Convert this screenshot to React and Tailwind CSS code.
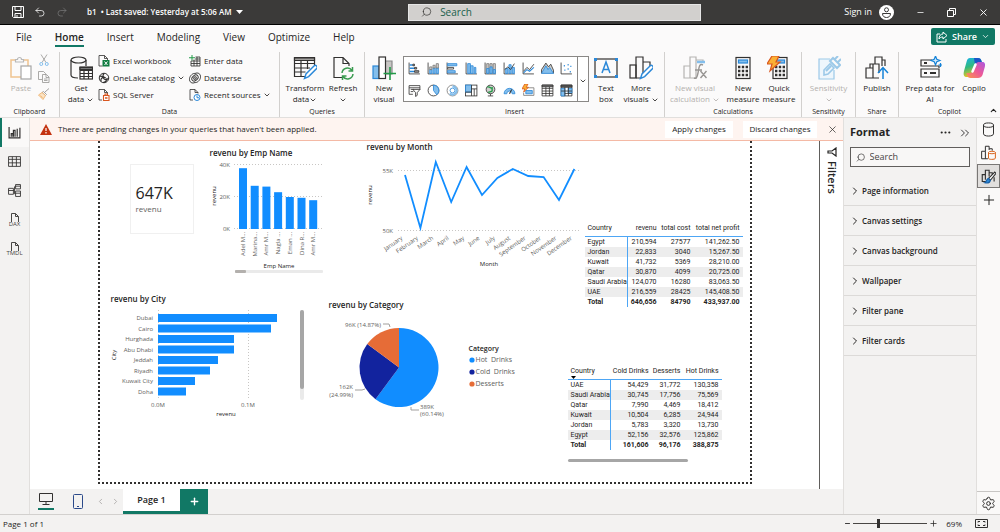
import { ChevronDown, ChevronUp, ChevronRight, ChevronsRight, Search, X, Plus, Minus, Ellipsis, Undo2, Redo2, Settings } from "lucide-react";

const INK = "#323130";
const BLUE = "#2b88d8";
const SKY = "#83beec";

const Svg = ({ w = 24, h = 24, className = "", children }) => (
  <svg width={w} height={h} viewBox="0 0 24 24" fill="none" stroke={INK} strokeWidth="1.2" className={"shrink-0 " + className} aria-hidden="true">{children}</svg>
);

const Calculator = () => (
  <>
    <rect x="5" y="1.5" width="14" height="21" />
    <rect x="7.5" y="4" width="9" height="3" fill={SKY} stroke={BLUE} />
    <path d="M7 11h2.4M10.800 11h2.400M14.600 11h2.400M7 15h2.400M10.800 15h2.400M14.600 15h2.400M7 19h2.400M10.800 19h2.400M14.600 19h2.400" strokeWidth="2.4" />
  </>
);

const Pencil = () => <path d="M11.500 22.500l1.500-4.500 8-8a1.800 1.800 0 0 1 2.600 2.600l-8 8z" fill="#fff" stroke={BLUE} strokeWidth="1.400" />;

const icons = {
  paste: <g><path d="M7 4H2v17h10M14 4h5v6" stroke="#f0c490" strokeWidth="1.500" /><path d="M6.500 6V3.500h2a2 2 0 0 1 4 0h2V6z" stroke="#b8b8b8" /><rect x="12" y="10" width="10" height="13" fill="#fff" stroke="#a6a6a6" /></g>,
  cut: <g stroke="#979593"><path d="M6 1l10 16M18 1L8 17" strokeWidth="1.600" /><circle cx="6.500" cy="20" r="3" stroke={SKY} strokeWidth="2" /><circle cx="17.500" cy="20" r="3" stroke={SKY} strokeWidth="2" /></g>,
  copy: <g stroke="#979593" strokeWidth="1.600"><path d="M8 17H1V1h10l4 4v2" /><path d="M9 7h8l5 5v11H9zM16 7v6h6M12 16h7M12 19h7" /></g>,
  brush: <g strokeWidth="1.800"><path d="M22 1l-8 7M11 7l6 6-2 2-7-6z" stroke="#979593" /><path d="M8 9l7 6-5 8L1 14zM5 15l4 5" stroke="#eeb370" fill="#fbe3c4" /></g>,
  getdata: <g><ellipse cx="9.500" cy="4" rx="7.500" ry="3" /><path d="M2 4v15c0 1.800 3 3 7 3M17 4v6" /><rect x="11" y="11" width="12.500" height="12" fill="#fff" /><path d="M11 14.500h12.500M11 17.500h12.500M11 20.500h12.500M15 11v12M19.500 11v12" /><path d="M11 11.500h12.500v2H11z" fill="#777" /></g>,
  transform: <g><path d="M21.500 9V1.500h-20v19H12M1.500 7.500h20M1.500 12H17M1.500 16h11M8 5v15.500M14.500 5v8" /><path d="M1.500 2h20v2.500h-20z" fill="#a19f9d" /><Pencil /></g>,
  refresh: <g><path d="M12 21.500H3v-20h9l6 6V10M12 1.500v6h6" /><path d="M11 17a5.500 5.500 0 0 1 10-2.500M22 18a5.500 5.500 0 0 1-10 2.500M21.500 11v4h-4M11.500 24v-4h4" stroke="#3a9b50" strokeWidth="1.500" /></g>,
  newvisual: <g><rect x="1" y="10" width="6" height="12.500" fill={SKY} stroke={BLUE} /><path d="M13 5h7v13h-7z" fill="#c8c6c4" stroke="#888" /><rect x="7" y="1" width="6.500" height="21.500" fill="#fff" /><path d="M18 11v13M11.500 17.500h12.500" stroke="#239a48" strokeWidth="1.600" /></g>,
  textbox: <g><rect x="1" y="3" width="22" height="18" /><path d="M8 17l4-11 4 11M9.300 13.500h5.400" stroke={BLUE} strokeWidth="1.500" /><path d="M0 2h3v3H0zM21 2h3v3h-3zM0 19h3v3H0zM21 19h3v3h-3z" fill={BLUE} stroke="none" /></g>,
  morevisuals: <g><rect x="1" y="9" width="6" height="13" /><path d="M7 22V1h7v17M14 6h7v4M7 22h5" /><Pencil /></g>,
  visualcalc: <g stroke="#b5b3b1"><path d="M1 10h6v12H1zM7 1h6v21H7zM13 4h7v3" /><path d="M14 6h8" stroke={SKY} strokeWidth="2.500" /><path d="M20 9c-4-2-4 3-5 8s-2 6-4 5M12 14h7M17.500 15l6 7M23.500 15l-6 7" stroke="#979593" strokeWidth="1.400" /></g>,
  newmeasure: <Calculator />,
  quick: <g transform="translate(1 0)"><Calculator /><path d="M4 0h7L8 6h4L2 15l2-7H-1z" fill="#fbb034" stroke="#d9561f" /></g>,
  sensitivity: <g stroke="#9cc9e8"><path d="M13 3H2v20h15v-9" fill="#eef6fc" /><path d="M7 14l6-6 4 4-6 6-4 1z" strokeWidth="1.600" /><path d="M13 5l3-3 7 7-3 3zM17 4l4-4M20 7l4-4M9 15l5-5" strokeWidth="2" /></g>,
  publish: <g><path d="M1 12h7v10H1zM8 12V8h6v9M10 8V1h7v9M8 22h6M5 12V8h4M17 4h3v6" /><path d="M18 23V12M13 17l5-5.500 5 5.500" stroke="#1683d8" strokeWidth="1.500" /></g>,
  prep: <g><path d="M14 4H3v6h18v2M3 13h18v8H3z" /><path d="M6 7h3M6 17h3M12 17h6" strokeWidth="2" /><path d="M17.500 0l1.300 3.200L22 4.500l-3.200 1.300L17.500 9l-1.300-3.200L13 4.500l3.200-1.300z" fill="#cfe9fb" stroke="#1683d8" /><path d="M22.500 7v4M20.500 9h4" stroke="#1683d8" /></g>,
};

const CopilotLogo = () => (
  <svg width="24" height="24" viewBox="0 0 24 24" aria-hidden="true">
    <defs>
      <linearGradient id="cpA" x1="0" y1="0" x2="0.300" y2="1"><stop offset="0" stopColor="#17b2e8" /><stop offset="0.500" stopColor="#31b97e" /><stop offset="1" stopColor="#f2c51b" /></linearGradient>
      <linearGradient id="cpB" x1="1" y1="0" x2="0" y2="1"><stop offset="0" stopColor="#a958e0" /><stop offset="0.500" stopColor="#ee5896" /><stop offset="1" stopColor="#f99a49" /></linearGradient>
    </defs>
    <path d="M8 2h8c2 0 3 1 3.500 3l.8 2.500H16c-2 0-3 1-3.500 3L10 18c-.6 2-1.500 3-3.500 3H5c-3 0-4-2-3-6l2.500-9C5.300 3 6 2 8 2z" fill="url(#cpA)" />
    <path d="M12 2h4c2 0 3 1 3.500 3l.8 2.500H16c-1.500 0-2.500.6-3 2z" fill="#1b55c8" />
    <path d="M16 22H8.500C6.500 22 5.500 21 5 19l-.6-2H8c2 0 3-1 3.500-3L14 8c.6-1.500 1.500-2 3.500-2H20c3 0 3.500 2 2.800 5l-2.300 8c-.7 2-2.500 3-4.500 3z" fill="url(#cpB)" />
    <path d="M13.500 8.500l-3 7" stroke="#fff" strokeWidth="2.500" strokeLinecap="round" />
  </svg>
);

const rowIcons = {
  excel: <g strokeWidth="1.600"><path d="M9 22H2V1h11l6 6v3M13 1v6h6" /><rect x="9" y="10" width="14" height="13" fill="#107c41" stroke="none" /><path d="M13 13l6 7M19 13l-6 7" stroke="#fff" strokeWidth="2" /></g>,
  onelake: <g strokeWidth="2"><circle cx="12" cy="12" r="9.500" /><path d="M3 9c7-3 7 5 11 6s6-1 7-3M6 19c-1-6 2-9 8-8M12 3c-4 4-2 8 4 9M10 21c5 0 8-4 7-8" strokeWidth="2.400" /></g>,
  sql: <g strokeWidth="1.600"><path d="M8 22H2V1h11l6 6v3M13 1v6h6" /><path d="M11 13h11v10H11zM14 13v-3h5v3" fill="#fff" stroke="#d9561f" strokeWidth="2.200" /><path d="M14 18h5" stroke="#d9561f" strokeWidth="3" /></g>,
  enter: <g strokeWidth="1.700"><path d="M13 4h9v18H4V12M4 17h18M4 12h18M12 8h10M10 9v13M16 4v18" /><path d="M6 0v11M0 5.500h12" stroke="#239a48" strokeWidth="2" /></g>,
  dataverse: <g strokeWidth="1.900"><path d="M12 3c6-3 12 1 11 8-1 6-7 11-11 10M12 21c-6 3-12-1-11-8C2 7 8 2 12 3" /><ellipse cx="12" cy="12" rx="7" ry="5" transform="rotate(-40 12 12)" /><ellipse cx="12" cy="12" rx="3" ry="2" transform="rotate(-40 12 12)" /></g>,
  recent: <g strokeWidth="1.600"><path d="M8 22H2V1h10l6 6v2M12 1v6h6" /><circle cx="16" cy="17" r="6" fill="#fff" stroke={BLUE} strokeWidth="2" /><path d="M16 13v4.500h4" stroke={BLUE} strokeWidth="2" /></g>,
};

const AXES = <path d="M2 1v21h20" />;
const gallery = [
  ["Stacked bar chart", <>{AXES}<path d="M3 4h6v3H3zM3 10h9v3H3zM3 16h9v3H3z" fill={BLUE} stroke="none" /><path d="M9 4h3v3H9zM12 10h4v3h-4zM12 16h8v3h-8z" fill="#a19f9d" /></>],
  ["Stacked column chart", <>{AXES}<path d="M5 14h4v7H5zM11 11h4v10h-4zM17 11h4v10h-4z" fill={SKY} stroke={BLUE} /><path d="M5 9h4v5H5zM11 6h4v5h-4zM17 3h4v8h-4z" fill="#d2d0ce" stroke="#797775" /></>],
  ["Clustered bar chart", <>{AXES}<path d="M3 3h17v4H3zM3 16h14v4H3z" fill={SKY} stroke={BLUE} /><path d="M3 10h11v3H3z" fill="#fff" /></>],
  ["Clustered column chart", <>{AXES}<path d="M5 3h5v18H5z" fill={SKY} stroke={BLUE} /><path d="M10 7h5v14h-5zM17 10h3v11h-3z" fill={SKY} stroke={BLUE} /></>],
  ["100% stacked chart", <>{AXES}<path d="M5 3h4v18H5zM11 3h4v18h-4zM17 3h4v18h-4z" fill="#d2d0ce" stroke="#797775" /><path d="M5 12h4v9H5zM11 9h4v12h-4zM17 14h4v7h-4z" fill={SKY} stroke={BLUE} /></>],
  ["Line and column chart", <>{AXES}<path d="M5 12h4v9H5zM11 5h4v16h-4zM17 10h4v11h-4z" fill={SKY} stroke={BLUE} /><path d="M3 14l6-5 5 5 7-11" /></>],
  ["Line chart", <>{AXES}<path d="M3 17l6-7 5 4 8-10" /><path d="M3 20l6-6 5 3 8-7" stroke={BLUE} strokeWidth="2" /></>],
  ["Area chart", <><path d="M1 21V14l8-12 5 7 4-5 5 11v6" fill="#d2d0ce" /><path d="M1 21l8-14 4 7 3-4 7 11z" fill={SKY} stroke={BLUE} /></>],
  ["Scatter chart", <>{AXES}<path d="M7 7h2M14 5h2M19 8h2M8 15h2M14 13h2M18 18h2" stroke={BLUE} strokeWidth="2.500" /></>],
  ["Slicer", <><path d="M9 19H2V3h20v8M2 7h20M5 10h6M5 14h5" /><path d="M9 10h13l-5 6v5l-3 2v-7z" fill="#fff" /></>],
  ["Pie chart", <><circle cx="12" cy="12" r="10" /><path d="M12 2a10 10 0 0 1 6 18l-6-8z" fill={SKY} stroke={BLUE} /></>],
  ["Donut chart", <><circle cx="12" cy="12" r="10" stroke="#797775" /><circle cx="12" cy="12" r="4.500" stroke={BLUE} /><path d="M12 4.500a7.500 7.500 0 1 1-5 13" stroke={SKY} strokeWidth="4" /></>],
  ["Treemap", <><rect x="1" y="2" width="21" height="20" /><path d="M1 2h11v13H1z" fill={SKY} stroke={BLUE} /><path d="M12 9h10M17 9v13M1 15h11M12 2v20" /></>],
  ["Map", <><circle cx="12" cy="10" r="8" fill="#d2d0ce" /><path d="M6 6c5-3 5 3 9 1v6c-3 3-6 0-7 3" stroke="#239a48" strokeWidth="2.500" /><path d="M7 22h10M12 18v4" /></>],
  ["Gauge", <><path d="M2 18a10 10 0 0 1 20 0h-5a5 5 0 0 0-10 0z" fill={SKY} stroke={BLUE} /><path d="M12 18l4-8" strokeWidth="2" /></>],
  ["Card", <><path d="M7 7h15v14H3v-5" stroke="#797775" /><path d="M7 12h12v6H7z" fill={SKY} stroke={BLUE} /><path d="M5 0h6L8 6h4l-9 9 2-6H0z" fill="#fbb034" stroke="#d9561f" /></>],
  ["Table", <><path d="M2 2h20v20H2zM2 8h20M2 13h20M2 17.500h20M9 5v17M15.500 5v17" /><path d="M2 2h20v3H2z" fill="#777" /></>],
  ["Matrix", <><path d="M2 2h20v20H2z" fill="#fff" /><path d="M2 8h7v14H2zM15 8h7v9h-7z" fill={SKY} stroke={BLUE} /><path d="M2 13h20M9 17.500h13M9 5v17M15.500 5v17" /><path d="M2 2h20v4H2z" fill="#555" /></>],
];

const Chevron = () => <ChevronDown size={8} strokeWidth={2.5} className="inline-block" />;

const Group = ({ label, className, children }) => (
  <section aria-label={label} className={"flex flex-col border-r border-[#d2d0ce] " + className}>
    <div className="flex h-[55px] items-start">{children}</div>
    <div className="text-center text-[7px] leading-[10px]">{label}</div>
  </section>
);

const BigButton = ({ icon, lines, chevron, disabled, className }) => (
  <button disabled={disabled} className={"flex flex-col items-center pt-1 text-[8px] leading-[11px] whitespace-nowrap " + (disabled ? "text-[#b3b0ad] " : "") + className}>
    {icon === "copilot" ? <CopilotLogo /> : <Svg>{icons[icon]}</Svg>}
    <span className="mt-[2px]">{lines[0]}</span>
    <span>{lines[1]}{chevron && <Chevron />}</span>
  </button>
);

const RowButton = ({ icon, label, chevron }) => (
  <button className="flex h-[17px] items-center gap-[3px] text-[8px] whitespace-nowrap">
    <Svg w={12} h={12}>{rowIcons[icon]}</Svg>
    <span>{label} {chevron && <Chevron />}</span>
  </button>
);

const TitleBar = () => (
  <header className="flex h-[25px] items-center border-b border-black bg-[#3b3a39] text-white">
    <div className="flex w-[408px] items-center pl-3 text-[8px]">
      <button aria-label="Save" className="mr-[10px]">
        <svg width="12" height="12" viewBox="0 0 12 12" fill="none" stroke="#fff"><path d="M.5.5h11v11h-10l-1-1zM3 .5v4h6v-4M3 11.500v-4h6v4M5 9v2.500" /></svg>
      </button>
      <button aria-label="Undo" className="mr-[10px]"><Undo2 size={12} strokeWidth={1.5} /></button>
      <button aria-label="Redo" className="mr-[19px] text-[#777]"><Redo2 size={12} strokeWidth={1.5} /></button>
      <span className="font-semibold">b1 &nbsp;• Last saved: Yesterday at 5:06 AM</span>
      <svg width="7" height="4" viewBox="0 0 7 4" className="ml-1" fill="#fff"><path d="M0 0h7L3.500 4z" /></svg>
    </div>
    <label className="flex h-[17px] flex-1 items-center gap-2 border border-[#e5e5e5] bg-[#d2d0ce] px-3 text-[#323130]">
      <Search size={12} strokeWidth={1.5} className="-scale-x-100" />
      <input type="search" aria-label="Search" placeholder="Search" className="w-full bg-transparent text-[10px] outline-none placeholder:text-[#205e4c]" />
    </label>
    <div className="flex w-[299px] items-center justify-end pr-[11px]">
      <button className="mr-[7px] text-[9px]">Sign in</button>
      <button aria-label="Account" className="mr-[22px]">
        <svg width="15" height="15" viewBox="0 0 15 15"><circle cx="7.500" cy="7.500" r="7.500" fill="#fff" /><g fill="none" stroke="#3b3a39"><circle cx="7.500" cy="4.800" r="2" /><path d="M3.500 8.500h8c0 3-2 4-4 4s-4-1-4-4z" /></g></svg>
      </button>
      <button aria-label="Minimize" className="mr-[22px]"><Minus size={9} strokeWidth={2} /></button>
      <button aria-label="Restore" className="mr-[22px]">
        <svg width="9" height="9" viewBox="0 0 9 9" fill="none" stroke="#fff"><path d="M.5 2.500h6v6h-6zM2.500 2.500v-2h6v6h-2" /></svg>
      </button>
      <button aria-label="Close"><X size={11} strokeWidth={2} /></button>
    </div>
  </header>
);

const MENU = ["File", "Home", "Insert", "Modeling", "View", "Optimize", "Help"];

const MenuBar = () => (
  <nav className="flex h-[23px] items-center justify-between bg-[#fbfafa] pr-[5px] pl-4">
    <div className="flex gap-[23px] text-[10px]">
      {MENU.map((m) => (
        <button key={m} className={"h-[20px] border-b-2 leading-[20px] " + (m === "Home" ? "border-[#117865] font-semibold" : "border-transparent")}>{m}</button>
      ))}
    </div>
    <button className="flex h-[17px] items-center gap-1 rounded-xs bg-[#117865] px-[5px] text-[9px] font-semibold text-white">
      <svg width="12" height="12" viewBox="0 0 12 12" fill="none" stroke="#fff"><path d="M4 3H1v8h9V8M7 1l4 3.500L7 8V6C5 6 4 6.500 3 8c0-3 1.500-5 4-5z" /></svg>
      Share
      <ChevronDown size={9} />
    </button>
  </nav>
);

const Ribbon = () => (
  <div className="relative flex h-[70px] border-b border-[#e1dfdd] bg-[#fbfafa] pt-1">
    <Group label="Clipboard" className="w-[60px]">
      <BigButton icon="paste" lines={["Paste", ""]} disabled className="w-[38px] pl-1" />
      <div className="mt-[2px] flex flex-col gap-[5px]">
        {["cut", "copy", "brush"].map((n) => (
          <button key={n} aria-label={n} disabled><Svg w={12} h={12}>{icons[n]}</Svg></button>
        ))}
      </div>
    </Group>
    <Group label="Data" className="w-[220px]">
      <BigButton icon="getdata" lines={["Get", "data "]} chevron className="w-[38px] pl-1" />
      <div className="w-[91px]">
        <RowButton icon="excel" label="Excel workbook" />
        <RowButton icon="onelake" label="OneLake catalog" chevron />
        <RowButton icon="sql" label="SQL Server" />
      </div>
      <div>
        <RowButton icon="enter" label="Enter data" />
        <RowButton icon="dataverse" label="Dataverse" />
        <RowButton icon="recent" label="Recent sources" chevron />
      </div>
    </Group>
    <Group label="Queries" className="w-[85px]">
      <BigButton icon="transform" lines={["Transform", "data"]} chevron className="w-[50px]" />
      <BigButton icon="refresh" lines={["Refresh", ""]} chevron className="w-[26px]" />
    </Group>
    <Group label="Insert" className="w-[300px]">
      <BigButton icon="newvisual" lines={["New", "visual"]} className="w-[38px]" />
      <div className="mt-1 flex h-[46px] border border-[#8a8886] bg-white">
        <div className="grid grid-cols-9 items-center px-[1px]">
          {gallery.map(([name, art]) => (
            <button key={name} title={name} aria-label={name} className="flex w-[19px] justify-center"><Svg w={13} h={13} className="stroke-[1.5]">{art}</Svg></button>
          ))}
        </div>
        <button aria-label="More visual types" className="border-l border-[#8a8886] px-[1px]"><Chevron /></button>
      </div>
      <BigButton icon="textbox" lines={["Text", "box"]} className="w-[34px]" />
      <BigButton icon="morevisuals" lines={["More", "visuals "]} chevron className="w-[36px]" />
    </Group>
    <Group label="Calculations" className="w-[137px]">
      <BigButton icon="visualcalc" lines={["New visual", "calculation "]} chevron disabled className="w-[60px]" />
      <BigButton icon="newmeasure" lines={["New", "measure"]} className="w-[36px]" />
      <BigButton icon="quick" lines={["Quick", "measure"]} className="w-[36px]" />
    </Group>
    <Group label="Sensitivity" className="w-[54px]">
      <BigButton icon="sensitivity" lines={["Sensitivity", ""]} chevron disabled className="w-full" />
    </Group>
    <Group label="Share" className="w-[43px]">
      <BigButton icon="publish" lines={["Publish", ""]} className="w-full" />
    </Group>
    <Group label="Copilot" className="flex-1 border-r-0">
      <BigButton icon="prep" lines={["Prep data for", "AI"]} className="w-[62px]" />
      <BigButton icon="copilot" lines={["Copilo", ""]} className="w-[26px]" />
    </Group>
    <button aria-label="Collapse ribbon" className="absolute right-[2px] bottom-[2px]"><ChevronUp size={9} strokeWidth={3} /></button>
  </div>
);

const views = [
  ["Report view", <path d="M2 2v20h20V3M6 20v-7M10 20V8h3v12M17 20V5M6 14h3v6" strokeWidth="2.200" />],
  ["Table view", <path d="M1 3h22v18H1zM1 8h22M1 14.500h22M8 3v18M15.500 3v18" strokeWidth="1.600" />],
  ["Model view", <path d="M1 8h9v11H1zM1 12h9M14 1h9v8h-9zM14 4h9M14 13h9v10h-9zM14 17h9M10 12h2V5h2M12 12v6h2" strokeWidth="1.600" />],
];

const LeftNav = () => (
  <nav className="flex w-[30px] flex-col border-r border-[#e1dfdd] bg-[#f3f2f1]">
    {views.map(([name, art], i) => (
      <button key={name} aria-label={name} className={"flex h-[29px] w-full items-center justify-center border-l-2 pr-[2px] " + (i === 0 ? "border-[#117865] bg-[#faf9f8]" : "border-transparent")}>
        <Svg w={13} h={13}>{art}</Svg>
      </button>
    ))}
    {["DAX", "TMDL"].map((t) => (
      <button key={t} className="flex h-[29px] w-full flex-col items-center justify-center text-[6px] leading-[5px] text-[#484644]">
        <svg width="10" height="9" viewBox="0 0 10 9" fill="none" stroke="#484644"><path d="M1.500 9V.5h4l3 3V9M5.500.5v3h3" /></svg>
        {t}
      </button>
    ))}
  </nav>
);

const Notice = () => (
  <div role="alert" className="flex h-[23px] items-center border-b border-[#f4b9a5] bg-[#fef4f0] pr-[5px] pl-[10px] text-[8px]">
    <svg width="12" height="11" viewBox="0 0 12 11"><path d="M6 0l6 11H0z" fill="#c4320f" /><path d="M6 4v3M6 8v1.500" stroke="#fff" strokeWidth="1.200" /></svg>
    <span className="ml-[6px] flex-1">There are pending changes in your queries that haven't been applied.</span>
    <button className="h-[17px] w-[68px] bg-white">Apply changes</button>
    <button className="ml-[10px] h-[17px] w-[74px] bg-white">Discard changes</button>
    <button aria-label="Dismiss" className="ml-[10px]"><X size={11} strokeWidth={1.5} /></button>
  </div>
);

const VisualTitle = ({ children }) => <h3 className="text-[8px] leading-[12px] font-semibold text-[#252423]">{children}</h3>;

const GRID = { stroke: "#c8c6c4", strokeWidth: 1, strokeDasharray: "1 2" };

const employees = [["Adel M...", 38], ["Marina...", 27], ["Amr M...", 26.5], ["Nagla ...", 23], ["Eman ...", 20], ["Dina R...", 19.5], ["Amr M...", 18]];

const EmpChart = () => (
  <svg width="120" height="116" viewBox="0 0 120 116" className="text-[6px]" fill="#605e5c">
    {[40, 20, 0].map((v) => (
      <g key={v}>
        <path d={`M27 ${69.5 - v * 1.6}h90`} {...GRID} />
        <text x="23" y={72 - v * 1.6} textAnchor="end">{v}K</text>
      </g>
    ))}
    {employees.map(([name, v], i) => (
      <g key={i}>
        <rect x={32 + i * 11.700} y={70 - v * 1.6} width="8" height={v * 1.6} fill="#118DFF" />
        <text transform={`translate(${38 + i * 11.700} 73) rotate(-90)`} textAnchor="end">{name}</text>
      </g>
    ))}
    <text transform="translate(9 37) rotate(-90)" textAnchor="middle" fill="#252423">revenu</text>
    <text x="72" y="109" textAnchor="middle" fill="#252423">Emp Name</text>
    <rect x="28" y="111" width="88" height="3" rx="1" fill="#eaeaea" />
    <rect x="28" y="111" width="11" height="3" rx="1" fill="#b3b0ad" />
  </svg>
);

const months = [["January", 23], ["February", 76], ["March", 10], ["April", 50], ["May", 15], ["June", 43], ["July", 26], ["August", 17], ["September", 24], ["October", 25], ["November", 48], ["December", 17]];

const MonthChart = () => (
  <svg width="221" height="118" viewBox="0 0 221 118" className="text-[6px]" fill="#605e5c">
    <path d="M36 17.500h183M36 77.500h183" {...GRID} />
    <text x="31" y="20" textAnchor="end">55K</text>
    <text x="31" y="80" textAnchor="end">50K</text>
    <polyline points={months.map(([, y], i) => `${43 + i * 15.400},${y - 1}`).join(" ")} fill="none" stroke="#118DFF" strokeWidth="1.800" />
    {months.map(([name], i) => (
      <text key={name} transform={`translate(${41 + i * 15.400} 86) rotate(-35)`} textAnchor="end">{name}</text>
    ))}
    <text transform="translate(10 42) rotate(-90)" textAnchor="middle" fill="#252423">revenu</text>
    <text x="127" y="113" textAnchor="middle" fill="#252423">Month</text>
  </svg>
);

const cities = [["Dubai", 119], ["Cairo", 113], ["Hurghada", 76], ["Abu Dhabi", 76], ["Jeddah", 60], ["Riyadh", 52], ["Kuwait City", 37], ["Doha", 28]];

const CityChart = () => (
  <svg width="200" height="114" viewBox="0 0 200 114" className="text-[6px]" fill="#605e5c">
    <path d="M50.500 5v89M140.500 5v89" {...GRID} />
    {cities.map(([name, v], i) => (
      <g key={name}>
        <rect x="50" y={9 + i * 10.500} width={v} height="8" fill="#118DFF" />
        <text x="45" y={15 + i * 10.500} textAnchor="end">{name}</text>
      </g>
    ))}
    <text x="50" y="102" textAnchor="middle">0.0M</text>
    <text x="140" y="102" textAnchor="middle">0.1M</text>
    <text x="118" y="111" textAnchor="middle" fill="#252423">revenu</text>
    <text transform="translate(8 50) rotate(-90)" textAnchor="middle" fill="#252423">City</text>
    <rect x="192" y="5" width="4" height="90" rx="2" fill="#eaeaea" />
    <rect x="192" y="5" width="4" height="79" rx="2" fill="#a6a6a6" />
  </svg>
);

const slices = [["Hot  Drinks", 0, 0.6014, "#118DFF"], ["Cold  Drinks", 0.6014, 0.8513, "#12239E"], ["Desserts", 0.8513, 1, "#E66C37"]];

const arc = (from, to) => {
  const pt = (t) => `${73 + 39.5 * Math.sin(t * 2 * Math.PI)} ${56.5 - 39.5 * Math.cos(t * 2 * Math.PI)}`;
  return `M73 56.5L${pt(from)}A39.5 39.5 0 ${to - from > 0.5 ? 1 : 0} 1 ${pt(to)}z`;
};

const CategoryChart = () => (
  <div className="flex">
    <svg width="143" height="114" viewBox="0 0 143 114" className="text-[6px]" fill="#605e5c">
      {slices.map(([name, from, to, color]) => <path key={name} d={arc(from, to)} fill={color} />)}
      <path d="M57 13h6l1 3M29 79h7l3-1M85 96v3h8" fill="none" stroke="#a19f9d" />
      <text x="55" y="16" textAnchor="end">96K (14.87%)</text>
      <text x="27" y="78" textAnchor="end">162K</text>
      <text x="27" y="86" textAnchor="end">(24.99%)</text>
      <text x="94" y="98">389K</text>
      <text x="94" y="105">(60.14%)</text>
    </svg>
    <div className="mt-[33px] text-[7px] leading-[12px] text-[#605e5c]">
      <div className="leading-[10px] font-semibold text-[#252423]">Category</div>
      {slices.map(([name, , , color]) => (
        <div key={name} className="flex items-center gap-[1px] whitespace-pre">
          <svg width="6" height="6" viewBox="0 0 6 6"><circle cx="3" cy="3" r="2.600" fill={color} /></svg>
          {name}
        </div>
      ))}
    </div>
  </div>
);

const DataTable = ({ caption, head, rows, cols, sorted }) => (
  <table aria-label={caption} className="w-full table-fixed border-collapse text-right font-['Roboto',sans-serif] text-[7px] leading-[10px] whitespace-nowrap text-[#252423]">
    <colgroup>{cols.map((c, i) => <col key={i} className={c} />)}</colgroup>
    <thead>
      <tr className="h-[16px] border-b border-[#4da6f5]">
        {head.map((h, i) => (
          <th key={h} className={"relative p-0 font-normal " + (i === 0 ? "pl-[3px] text-left" : "pr-[3px]")}>
            {h}
            {sorted && i === 0 && <svg width="5" height="3" viewBox="0 0 5 3" className="absolute bottom-0 left-[3px]"><path d="M0 0h5L2.500 3z" /></svg>}
          </th>
        ))}
      </tr>
    </thead>
    <tbody>
      {rows.map((r) => (
        <tr key={r[0]} className="even:bg-[#ededed] last:bg-white last:font-bold">
          {r.map((c, i) => <td key={i} className={"p-0 " + (i === 0 ? "border-r border-[#4da6f5] pl-[3px] text-left" : "pr-[3px]")}>{c}</td>)}
        </tr>
      ))}
    </tbody>
  </table>
);

const profit = [
  ["Egypt", "210,594", "27577", "141,262.50"],
  ["Jordan", "22,833", "3040", "15,267.50"],
  ["Kuwait", "41,732", "5369", "28,210.00"],
  ["Qatar", "30,870", "4099", "20,725.00"],
  ["Saudi Arabia", "124,070", "16280", "83,063.50"],
  ["UAE", "216,559", "28425", "145,408.50"],
  ["Total", "646,656", "84790", "433,937.00"],
];

const byCategory = [
  ["UAE", "54,429", "31,772", "130,358"],
  ["Saudi Arabia", "30,745", "17,756", "75,569"],
  ["Qatar", "7,990", "4,469", "18,412"],
  ["Kuwait", "10,504", "6,285", "24,944"],
  ["Jordan", "5,783", "3,320", "13,730"],
  ["Egypt", "52,156", "32,576", "125,862"],
  ["Total", "161,606", "96,176", "388,875"],
];

const Report = () => (
  <div className="mb-[5px] flex w-full max-w-[654px] flex-col border-x-2 border-b-2 border-dotted border-[#323130]">
    <div className="flex h-[149px] items-start">
      <div className="mt-[23px] ml-[30px] flex h-[70px] w-[64px] flex-col justify-center border border-[#f0f0f0] pl-[5px]">
        <div className="text-[16px] leading-[20px] font-medium text-[#252423]">647K</div>
        <div className="text-[8px] leading-[12px] text-[#605e5c]">revenu</div>
      </div>
      <div className="mt-[6px] ml-[13px] w-[120px] [&>h3]:pl-[3px]">
        <VisualTitle>revenu by Emp Name</VisualTitle>
        <EmpChart />
      </div>
      <div className="ml-[35px] w-[221px] [&>h3]:pl-[5px]">
        <VisualTitle>revenu by Month</VisualTitle>
        <MonthChart />
      </div>
      <div className="mt-[79px] ml-[2px] w-[158px]">
        <DataTable caption="Revenue, cost and profit" head={["Country", "revenu", "total cost", "total net profit"]} rows={profit} cols={["w-[43px]", "w-[32px]", "w-[34px]", "w-[49px]"]} />
      </div>
    </div>
    <div className="flex flex-1 items-start">
      <div className="mt-[3px] ml-[8px] w-[200px] [&>h3]:pl-[3px]">
        <VisualTitle>revenu by City</VisualTitle>
        <CityChart />
      </div>
      <div className="mt-[9px] ml-[18px] w-[200px] [&>h3]:pl-[3px]">
        <VisualTitle>revenu by Category</VisualTitle>
        <CategoryChart />
      </div>
      <div className="mt-[73px] ml-[42px] w-[154px]">
        <DataTable caption="Revenue by country and category" head={["Country", "Cold Drinks", "Desserts", "Hot Drinks"]} rows={byCategory} cols={["w-[43px]", "w-[41px]", "w-[32px]", "w-[38px]"]} sorted />
        <div className="mt-[9px] h-[3px] w-[120px] rounded-full bg-[#a6a6a6]" />
      </div>
    </div>
  </div>
);

const FiltersStrip = () => (
  <button className="flex w-[24px] flex-col items-center gap-1 border-l border-[#605e5c] bg-white pt-[6px]">
    <svg width="10" height="10" viewBox="0 0 10 10" fill="none" stroke="#252423" strokeWidth="1.200"><path d="M9 1v8L5 6H1V4h4z" /></svg>
    <span className="text-[11px] leading-[14px] font-semibold [writing-mode:vertical-rl]">Filters</span>
  </button>
);

const PageTabs = () => (
  <div className="flex h-[25px] items-stretch bg-[#f3f2f1]">
    <button aria-label="Desktop layout" className="mb-1 ml-2 flex w-[16px] flex-col items-center justify-between border-b-2 border-[#117865] pt-1">
      <svg width="14" height="12" viewBox="0 0 14 12" fill="none" stroke="#323130"><path d="M.5.5h13v8H.5zM7 8.500v3M3.500 11.500h7" /></svg>
    </button>
    <button aria-label="Mobile layout" className="ml-[19px]">
      <svg width="10" height="15" viewBox="0 0 10 15" fill="none" stroke="#2b4a8a"><rect x=".5" y=".5" width="9" height="14" rx="1" /><path d="M4 12.500h2" /></svg>
    </button>
    <button aria-label="Previous page" className="ml-[13px] text-[#a19f9d]"><ChevronRight size={9} className="rotate-180" /></button>
    <button aria-label="Next page" className="ml-[6px] text-[#a19f9d]"><ChevronRight size={9} /></button>
    <button className="ml-[3px] w-[57px] border-b-[3px] border-[#117865] bg-white text-[9px] font-semibold">Page 1</button>
    <button aria-label="New page" className="flex w-[28px] items-center justify-center bg-[#117865] text-white"><Plus size={11} strokeWidth={3} /></button>
  </div>
);

const SECTIONS = ["Page information", "Canvas settings", "Canvas background", "Wallpaper", "Filter pane", "Filter cards"];

const FormatPane = () => (
  <aside className="w-[134px] border-x border-[#e1dfdd] bg-[#f3f2f1]">
    <div className="flex h-[29px] items-center pr-[4px] pl-[6px]">
      <h2 className="flex-1 text-[11px] font-bold">Format</h2>
      <button aria-label="More options"><Ellipsis size={13} /></button>
      <button aria-label="Collapse pane" className="ml-[6px]"><ChevronsRight size={14} strokeWidth={1.5} /></button>
    </div>
    <label className="mx-[6px] flex h-[20px] items-center gap-1 border border-[#605e5c] bg-[#f8f7f6] px-[5px]">
      <Search size={11} strokeWidth={1.5} className="-scale-x-100" />
      <input type="search" aria-label="Search format options" placeholder="Search" className="w-full bg-transparent text-[9px] outline-none placeholder:text-[#484644]" />
    </label>
    <div className="mt-[9px]">
      {SECTIONS.map((s) => (
        <button key={s} className="flex h-[30px] w-full items-center gap-[1px] border-b border-[#dcdad8] pl-[5px] text-[8px] font-semibold">
          <ChevronRight size={12} />{s}
        </button>
      ))}
    </div>
  </aside>
);

const RightStrip = () => (
  <div className="flex w-[23px] flex-col bg-[#faf9f8]">
    <button aria-label="Data" className="flex h-[23px] items-center justify-center">
      <Svg w={15} h={15}><g strokeWidth="1.600"><ellipse cx="12" cy="5" rx="8" ry="3.500" /><path d="M4 5v14c0 2 3.500 3.500 8 3.500s8-1.500 8-3.500V5" /></g></Svg>
    </button>
    <button aria-label="Build" className="flex h-[23px] items-center justify-center">
      <Svg w={15} h={15}><g strokeWidth="1.600"><path d="M11 22H1V10h6v12M7 10V2h6v6M13 6h5v3" /><path d="M12 12v9c0 1.500 2 2 5 2s6-.5 6-2v-9" stroke="#d9661f" /><ellipse cx="17.500" cy="12" rx="5.500" ry="2" stroke="#d9661f" /></g></Svg>
    </button>
    <button aria-label="Format" aria-pressed="true" className="flex h-[24px] items-center justify-center border border-[#797775] bg-[#e1dfdd]">
      <Svg w={15} h={15}><g strokeWidth="1.800"><path d="M9 20H2V9h5v8M7 9V2h6v10M13 6h5v3M21 13v7" /><path d="M22 5l2 2-9 11-3-3z" fill="#fff" /><path d="M12 15l3 3c-1 4-5 5-9 4 3-1 2-6 6-7z" fill={BLUE} stroke="#185fa5" /></g></Svg>
    </button>
    <button aria-label="Add pane" className="flex h-[23px] items-center justify-center"><Plus size={16} strokeWidth={1.5} /></button>
    <button aria-label="Pane settings" className="mt-auto flex h-[23px] items-center justify-center border-t border-[#c8c6c4]"><Settings size={15} strokeWidth={1.5} /></button>
  </div>
);

const StatusBar = () => (
  <footer className="flex h-[18px] items-center border-t border-[#d2d0ce] bg-[#f3f2f1] pr-[12px] pl-[3px] text-[8px]">
    <span className="flex-1">Page 1 of 1</span>
    <button aria-label="Zoom out"><Minus size={7} strokeWidth={3} /></button>
    <input type="range" aria-label="Zoom" min="10" max="200" defaultValue="73" className="mx-[2px] h-[11px] w-[74px] shrink-0 appearance-none bg-[linear-gradient(#484644,#484644)] bg-[length:100%_1px] bg-center bg-no-repeat [&::-webkit-slider-thumb]:h-[9px] [&::-webkit-slider-thumb]:w-[3px] [&::-webkit-slider-thumb]:appearance-none [&::-webkit-slider-thumb]:bg-[#323130]" />
    <button aria-label="Zoom in" className="mr-[8px]"><Plus size={9} /></button>
    <span className="mr-[13px]">69%</span>
    <button aria-label="Fit to page">
      <svg width="13" height="9" viewBox="0 0 13 9" fill="none" stroke="#323130"><path d="M.5.5h12v8H.5z" /><path d="M3 3.500v-1h2M8 2.500h2v1M10 5.500v1H8M5 6.500H3v-1" /></svg>
    </button>
  </footer>
);

const App = () => (
  <div className="flex h-screen flex-col overflow-hidden bg-white font-['Open_Sans','Noto_Sans',sans-serif] text-[#252423]">
    <TitleBar />
    <MenuBar />
    <Ribbon />
    <div className="flex min-h-0 flex-1">
      <LeftNav />
      <main className="flex min-w-0 flex-1 flex-col">
        <Notice />
        <div className="flex min-h-0 flex-1">
          <div className="flex min-w-0 flex-1 justify-center">
            <Report />
          </div>
          <FiltersStrip />
        </div>
        <PageTabs />
      </main>
      <FormatPane />
      <RightStrip />
    </div>
    <StatusBar />
  </div>
);

export default App;
